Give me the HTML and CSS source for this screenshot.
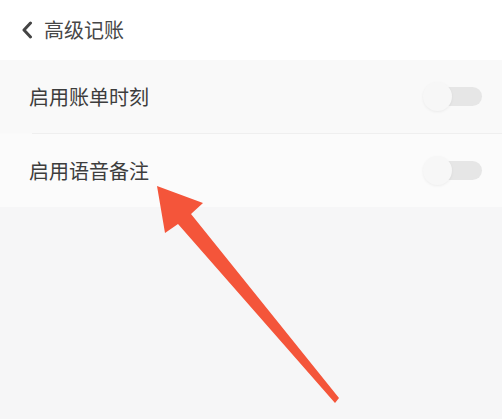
FILE: index.html
```html
<!DOCTYPE html>
<html lang="zh">
<head>
<meta charset="utf-8">
<link rel="stylesheet" href="styles.css">
</head>
<body>
<div class="page">
  <header class="nav">
    <svg class="back" width="12" height="18" viewBox="0 0 12 18"><path d="M9.5 2 L3 9 L9.5 16" fill="none" stroke="#444" stroke-width="3" stroke-linecap="round" stroke-linejoin="round"/></svg>
    <span class="title">高级记账</span>
  </header>
  <section class="list">
    <div class="row row1">
      <span class="label">启用账单时刻</span>
      <span class="switch"><span class="knob"></span></span>
    </div>
    <div class="divider"></div>
    <div class="row row2">
      <span class="label">启用语音备注</span>
      <span class="switch"><span class="knob"></span></span>
    </div>
  </section>
  <div class="rest"></div>
  <svg class="arrow" width="502" height="419" viewBox="0 0 502 419">
    <polygon points="157,186 203,203 191,214 339,398 335,403 178,224 165,233" fill="#f4553a"/>
  </svg>
</div>
</body>
</html>
```
FILE: styles.css
```css
html, body { margin: 0; padding: 0; }
body {
  width: 502px;
  height: 419px;
  overflow: hidden;
  background: #f6f6f7;
  font-family: "Noto Sans CJK SC", "Noto Sans", sans-serif;
}
.page { position: relative; width: 502px; height: 419px; }
.nav {
  height: 60px;
  background: #ffffff;
  display: flex;
  align-items: center;
  padding-left: 21px;
  gap: 11px;
}
.back { display: block; }
.title { font-size: 20px; color: #474747; line-height: 1; }
.list { background: #fafafa; }
.row {
  height: 73px;
  display: flex;
  align-items: center;
  justify-content: space-between;
  padding: 0 20px 0 29px;
}
.row1 { background: #f9f9f9; }
.row2 { background: #fbfbfb; }
.label { font-size: 20px; color: #3d3d3d; line-height: 1; }
.divider { height: 1px; background: #efefef; margin-left: 32px; }
.switch {
  position: relative;
  width: 50px;
  height: 19px;
  border-radius: 10px;
  background: #e6e6e6;
}
.knob {
  position: absolute;
  left: -9px;
  top: -5px;
  width: 29px;
  height: 29px;
  border-radius: 50%;
  background: #f7f7f7;
  box-shadow: 0 1px 3px rgba(0,0,0,0.06);
}
.rest { height: 212px; background: #f6f6f7; }
.arrow { position: absolute; left: 0; top: 0; }
```
